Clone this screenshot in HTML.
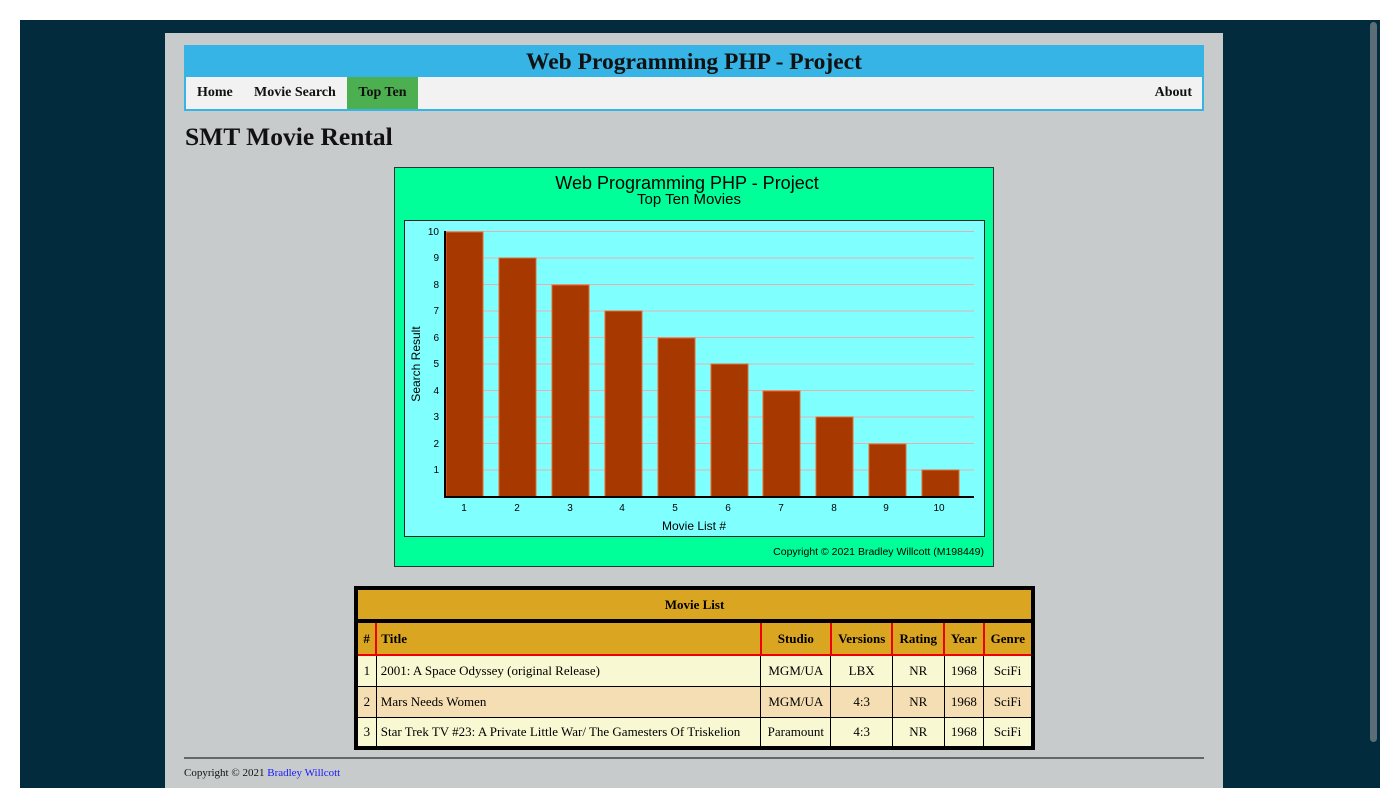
<!DOCTYPE html>
<html><head><meta charset="utf-8"><style>
*{margin:0;padding:0;box-sizing:border-box}
body{width:1400px;height:808px;background:#fff;position:relative;overflow:hidden;font-family:"Liberation Serif",serif}
.outer{position:absolute;left:20px;top:20px;width:1360px;height:768px;background:#022c3d}
.sb{position:absolute;left:1368px;top:20px;width:12px;height:768px;background:#022c3d}
.sb div{position:absolute;left:2px;top:2px;width:7px;height:720px;background:#5b6e77;border-radius:4px}
.page{position:absolute;left:165px;top:33px;width:1058px;height:755px;background:#c8cbcc}
.hdr{position:absolute;left:184px;top:45px;width:1020px;height:66px;border:2px solid #35b4e5;background:#f2f2f2}
.hdr .t{height:30px;background:#35b4e5;text-align:center;font-weight:bold;font-size:23.5px;line-height:30px;color:#111}
.nav{position:relative;height:32px;font-size:14px;font-weight:bold}
.nav span{position:absolute;top:0;line-height:32px;color:#111}
h1{position:absolute;left:185px;top:122px;font-size:25.5px;color:#111}
.chart{position:absolute;left:394px;top:167px;width:600px;height:400px;background:#00ff99;border:1px solid #333;font-family:"Liberation Sans",sans-serif}
.plot{position:absolute;left:9px;top:52px;width:581px;height:317px;background:#80ffff;border:1px solid #222}
table{position:absolute;left:354px;top:586px;width:681px;border-collapse:collapse;border:4px solid #000;font-size:13px}
td,th{border:1px solid #000;padding:0 5px;text-align:center;height:31px}
th{background:#daa520;font-size:13px}
.hr th{border:2px solid #e00;border-top:4px solid #000;height:34px}
.r1 td,.r3 td{background:#f8f8d2}.r2 td{background:#f5deb3}
td.l,th.l{text-align:left;padding-left:4px}
.foot{position:absolute;left:184px;top:757px;width:1020px;border-top:2px solid #666}
.ft{position:absolute;left:184px;top:767px;font-size:11px;color:#111}
.ft a{color:#1a1aff;text-decoration:none}
</style></head><body>
<div class="outer"></div>
<div class="sb"><div></div></div>
<div class="page"></div>
<div class="hdr"><div class="t">Web Programming PHP - Project</div>
<div class="nav"><span style="left:11px">Home</span><span style="left:68px">Movie Search</span><span style="left:161px;width:71px;background:#4caf50;text-align:center">Top Ten</span><span style="right:10px">About</span></div></div>
<h1>SMT Movie Rental</h1>
<div class="chart">
<div style="position:absolute;top:5px;width:100%;text-align:center;font-size:18px;padding-right:14px">Web Programming PHP - Project</div>
<div style="position:absolute;top:23px;width:100%;text-align:center;font-size:15px;padding-right:10px">Top Ten Movies</div>
<div class="plot"></div>
<svg style="position:absolute;left:0;top:0" width="600" height="400" font-family="Liberation Sans,sans-serif" font-size="10">
<g stroke="#e6b0b0" stroke-width="1">
<line x1="50" x2="579" y1="63.5" y2="63.5"/><line x1="50" x2="579" y1="90" y2="90"/><line x1="50" x2="579" y1="116.5" y2="116.5"/><line x1="50" x2="579" y1="143" y2="143"/><line x1="50" x2="579" y1="169.5" y2="169.5"/><line x1="50" x2="579" y1="196" y2="196"/><line x1="50" x2="579" y1="222.5" y2="222.5"/><line x1="50" x2="579" y1="249" y2="249"/><line x1="50" x2="579" y1="275.5" y2="275.5"/><line x1="50" x2="579" y1="302" y2="302"/>
</g>
<g fill="#a63800" stroke="#e86a30">
<rect x="51" y="64" width="37" height="265"/><rect x="104" y="90" width="37" height="239"/><rect x="157" y="117" width="37" height="212"/><rect x="210" y="143" width="37" height="186"/><rect x="263" y="170" width="37" height="159"/><rect x="316" y="196" width="37" height="133"/><rect x="368" y="223" width="37" height="106"/><rect x="421" y="249" width="37" height="80"/><rect x="474" y="276" width="37" height="53"/><rect x="527" y="302" width="37" height="27"/>
</g>
<line x1="50" y1="63" x2="50" y2="329" stroke="#000" stroke-width="2"/>
<line x1="49" y1="329" x2="579" y2="329" stroke="#000" stroke-width="2"/>
<g text-anchor="end"><text x="44" y="67">10</text><text x="44" y="93">9</text><text x="44" y="120">8</text><text x="44" y="146">7</text><text x="44" y="173">6</text><text x="44" y="199">5</text><text x="44" y="226">4</text><text x="44" y="252">3</text><text x="44" y="279">2</text><text x="44" y="305">1</text></g>
<g text-anchor="middle"><text x="69" y="343">1</text><text x="122" y="343">2</text><text x="175" y="343">3</text><text x="227" y="343">4</text><text x="280" y="343">5</text><text x="333" y="343">6</text><text x="386" y="343">7</text><text x="439" y="343">8</text><text x="491" y="343">9</text><text x="544" y="343">10</text>
<text x="299" y="362" font-size="12">Movie List #</text>
<text transform="translate(25,196) rotate(-90)" font-size="12">Search Result</text></g>
<text x="589" y="387" text-anchor="end" font-size="10.5">Copyright © 2021 Bradley Willcott (M198449)</text>
</svg></div>
<table>
<tr><th colspan="7" style="height:33px">Movie List</th></tr>
<tr class="hr"><th>#</th><th class="l">Title</th><th>Studio</th><th>Versions</th><th>Rating</th><th>Year</th><th>Genre</th></tr>
<tr class="r1"><td>1</td><td class="l">2001: A Space Odyssey (original Release)</td><td>MGM/UA</td><td>LBX</td><td>NR</td><td>1968</td><td>SciFi</td></tr>
<tr class="r2"><td>2</td><td class="l">Mars Needs Women</td><td>MGM/UA</td><td>4:3</td><td>NR</td><td>1968</td><td>SciFi</td></tr>
<tr class="r3"><td>3</td><td class="l">Star Trek TV #23: A Private Little War/ The Gamesters Of Triskelion</td><td>Paramount</td><td>4:3</td><td>NR</td><td>1968</td><td>SciFi</td></tr>
</table>
<div class="foot"></div>
<div class="ft">Copyright © 2021 <a>Bradley Willcott</a></div>
</body></html>
